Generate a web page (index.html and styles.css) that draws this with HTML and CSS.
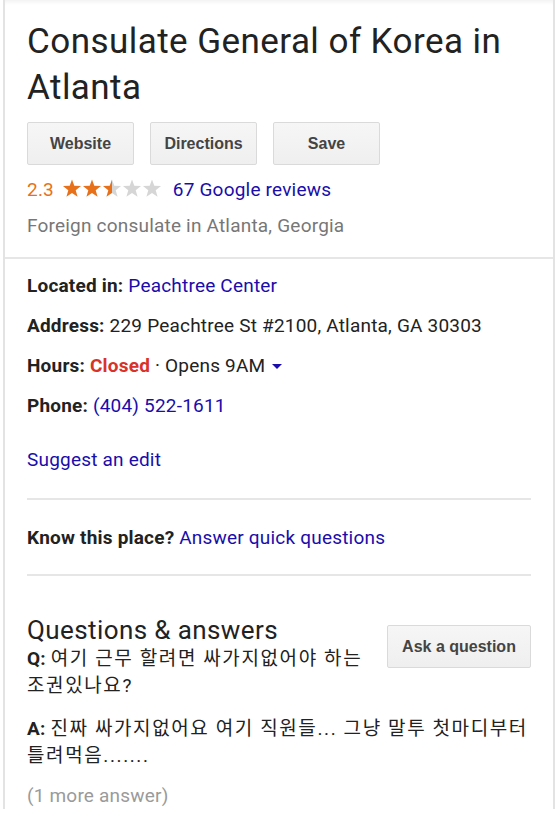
FILE: index.html
```html
<!DOCTYPE html>
<html lang="en">

<head>
  <meta charset="UTF-8">
  <meta name="viewport" content="width=device-width, initial-scale=1.0">
  <link rel="stylesheet" href="styles.css">
  <title>Consulate General of Korea in Atlanta</title>
</head>

<body>
  <div class="card">
    <div class="head">
      <h1 class="title">Consulate General of Korea in Atlanta</h1>
      <div class="actions">
        <button class="btn">Website</button>
        <button class="btn">Directions</button>
        <button class="btn">Save</button>
      </div>
      <div class="rating">
        <span class="score">2.3</span>
        <svg class="stars" width="100" height="20" viewBox="0 0 100 20">
          <defs>
            <symbol id="star" viewBox="0 0 20 20">
              <polygon points="10,0.5 12.29,6.84 19.03,7.06 13.71,11.21 15.58,17.69 10,13.9 4.42,17.69 6.29,11.21 0.97,7.06 7.71,6.84" />
            </symbol>
            <linearGradient id="half">
              <stop offset="50%" stop-color="#e7711b" />
              <stop offset="50%" stop-color="#d6d6d6" />
            </linearGradient>
          </defs>
          <use href="#star" x="0" y="0" width="20" height="20" fill="#e7711b" />
          <use href="#star" x="20" y="0" width="20" height="20" fill="#e7711b" />
          <use href="#star" x="40" y="0" width="20" height="20" fill="url(#half)" />
          <use href="#star" x="60" y="0" width="20" height="20" fill="#d6d6d6" />
          <use href="#star" x="80" y="0" width="20" height="20" fill="#d6d6d6" />
        </svg>
        <a class="link reviews" href="#">67 Google reviews</a>
      </div>
      <div class="category">Foreign consulate in Atlanta, Georgia</div>
    </div>

    <div class="main">
      <div class="facts">
        <div class="fact"><b>Located in:</b> <a class="link" href="#">Peachtree Center</a></div>
        <div class="fact"><b>Address:</b> 229 Peachtree St #2100, Atlanta, GA 30303</div>
        <div class="fact"><b>Hours:</b> <span class="closed">Closed</span> · Opens 9AM<span class="caret"></span></div>
        <div class="fact"><b>Phone:</b> <a class="link" href="#">(404) 522-1611</a></div>
      </div>
      <a class="link suggest" href="#">Suggest an edit</a>

      <div class="rule"></div>
      <div class="know"><b>Know this place?</b> <a class="link" href="#">Answer quick questions</a></div>
      <div class="rule tight"></div>

      <div class="qa">
        <button class="btn ask">Ask a question</button>
        <h2 class="qa-title">Questions &amp; answers</h2>
        <p class="qa-line"><b>Q:</b> <span class="ko">여기 근무 할려면 싸가지없어야 하는 조권있나요?</span></p>
        <p class="qa-line answer"><b>A:</b> <span class="ko">진짜 싸가지없어요 여기 직원들... 그냥 말투 첫마디부터 틀려먹음.......</span></p>
        <div class="more">(1 more answer)</div>
      </div>
    </div>
  </div>
</body>
</html>
```

FILE: styles.css
```css
html,
body {
  margin: 0;
  background: #fff;
}

body {
  font-family: Roboto, "Noto Sans CJK KR", sans-serif;
  color: #222;
}

.card {
  margin-left: 3px;
  width: 548px;
  border-left: 2px solid #e3e3e3;
  border-right: 2px solid #e3e3e3;
  box-shadow: inset 0 5px 4px -3px rgba(0, 0, 0, 0.06);
}

/* 上部: 名前・ボタン・評価 */
.head {
  padding: 19px 22px 13px;
  border-bottom: 2px solid #e6e6e6;
}

.title {
  margin: 0;
  font-size: 35px;
  font-weight: normal;
  letter-spacing: 0.45px;
  line-height: 46px;
  color: #222;
}

.actions {
  display: flex;
  gap: 16px;
  margin-top: 11px;
}

.btn {
  height: 43px;
  width: 107px;
  padding: 0;
  border: 1px solid #dadada;
  border-radius: 2px;
  background: linear-gradient(to bottom, #f6f6f6 0%, #efefef 100%);
  color: #444;
  font-family: "Liberation Sans", Arial, sans-serif;
  font-size: 16px;
  font-weight: bold;
  cursor: pointer;
}

.rating,
.category,
.fact,
.suggest,
.know,
.qa-line,
.more {
  font-size: 19px;
  letter-spacing: 0.2px;
}

.rating {
  margin-top: 7px;
  line-height: 36px;
}

.score {
  color: #e7711b;
}

.stars {
  vertical-align: -3px;
  margin: 0 6px 0 3px;
}

.link {
  color: #1a0dab;
  text-decoration: none;
}

.category {
  line-height: 36px;
  color: #777;
}

/* 詳細 */
.main {
  padding: 7px 22px 0;
}

.fact {
  line-height: 40px;
}

.fact b,
.know b,
.qa-line b {
  font-weight: bold;
  color: #222;
}

.closed {
  color: #d9322a;
  font-weight: bold;
}

.caret {
  display: inline-block;
  margin-left: 7px;
  vertical-align: middle;
  border-left: 5px solid transparent;
  border-right: 5px solid transparent;
  border-top: 5px solid #1a0dab;
}

.suggest {
  display: block;
  margin-top: 14px;
  line-height: 40px;
}

.rule {
  height: 2px;
  background: #e6e6e6;
  margin-top: 18px;
}

.rule.tight {
  margin-top: 16px;
}

.know {
  margin-top: 18px;
  line-height: 40px;
}

/* 質問と回答 */
.qa {
  display: flow-root;
  margin-top: 39px;
}

.qa-title {
  margin: 0;
  font-size: 26px;
  font-weight: normal;
  letter-spacing: 0.4px;
  line-height: 30px;
  color: #222;
}

.qa-line {
  margin: 0;
  line-height: 27px;
}

.ko {
  letter-spacing: 1.6px;
  word-break: keep-all;
}

.answer {
  margin-top: 16px;
}

.more {
  margin-top: 13px;
  line-height: 27px;
  color: #9a9a9a;
}

.ask {
  float: right;
  width: 144px;
  height: 43px;
  margin: 10px 0 0 12px;
}
```
